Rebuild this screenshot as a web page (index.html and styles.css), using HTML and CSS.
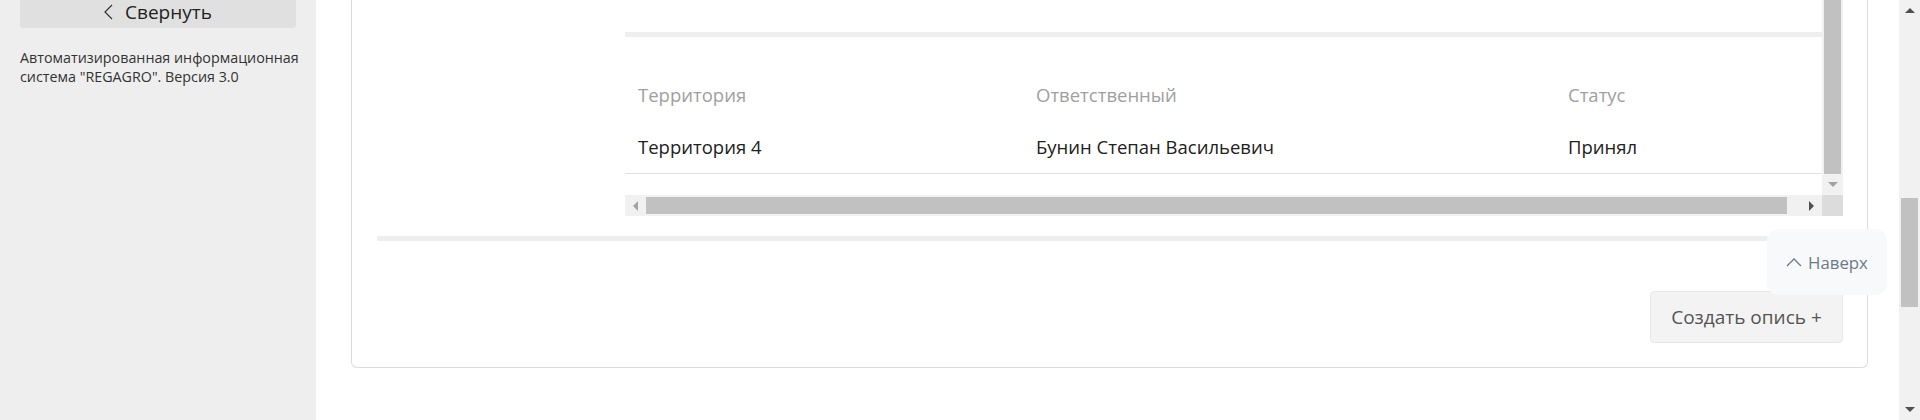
FILE: index.html
```html
<!DOCTYPE html>
<html lang="ru">
<head>
<meta charset="utf-8">
<title>REGAGRO</title>
<link rel="stylesheet" href="styles.css">
</head>
<body>
<div class="app">
  <aside class="sidebar">
    <button class="collapse">
      <svg class="chev-left" width="9" height="16" viewBox="0 0 9 16"><polyline points="8,1 1,8 8,15" fill="none" stroke="#333" stroke-width="1.2"/></svg>
      <span>Свернуть</span>
    </button>
    <p class="about">Автоматизированная информационная<br>система "REGAGRO". Версия 3.0</p>
  </aside>
  <main class="main">
    <section class="card">
      <div class="tablebox">
        <div class="tablerow">
          <div class="viewport">
            <div class="topbar"></div>
            <div class="grid head">
              <div>Территория</div><div>Ответственный</div><div>Статус</div>
            </div>
            <div class="grid body">
              <div>Территория 4</div><div>Бунин Степан Васильевич</div><div>Принял</div>
            </div>
          </div>
          <div class="vscroll">
            <div class="vthumb"></div>
            <div class="sbtn"><span class="tri down dis"></span></div>
          </div>
        </div>
        <div class="hscroll">
          <div class="sbtn"><span class="tri left dis"></span></div>
          <div class="hthumb"></div>
          <div class="hspace"></div>
          <div class="sbtn"><span class="tri right"></span></div>
          <div class="corner"></div>
        </div>
      </div>
      <div class="divider"></div>
      <div class="actions">
        <button class="create">Создать опись +</button>
      </div>
    </section>
  </main>
  <div class="pagescroll">
    <div class="psbtn"><span class="tri up"></span></div>
    <div class="pstrack"><div class="psthumb"></div></div>
    <div class="psbtn"><span class="tri down"></span></div>
  </div>
  <button class="totop">
    <svg width="16" height="10" viewBox="0 0 16 10"><polyline points="1,9 8,2 15,9" fill="none" stroke="#6c7a89" stroke-width="1.3"/></svg>
    <span>Наверх</span>
  </button>
</div>
</body>
</html>
```
FILE: styles.css
```css
* { box-sizing: border-box; }
html, body { margin: 0; padding: 0; }
body {
  width: 1920px;
  height: 420px;
  overflow: hidden;
  font-family: "Open Sans", "Noto Sans", sans-serif;
  background: #fff;
  color: #212121;
}
.app { display: flex; height: 420px; }

.sidebar {
  width: 316px;
  flex: none;
  background: #eeeeee;
  padding: 0 20px;
}
.collapse {
  display: flex;
  align-items: center;
  justify-content: center;
  gap: 12px;
  width: 100%;
  height: 28px;
  padding: 0 0 4px;
  border: none;
  border-radius: 0 0 4px 4px;
  background: #e0e0e0;
  font-family: inherit;
  font-size: 19px;
  line-height: 24px;
  color: #222;
}
.about {
  margin: 20px 0 0;
  font-size: 14.3px;
  line-height: 19px;
  white-space: nowrap;
  color: #333;
}

.main {
  flex: 1;
  padding: 0 31px 0 35px;
}
.card {
  border: 1px solid #dcdcdc;
  border-top: none;
  border-radius: 0 0 6px 6px;
  padding: 0 24px 24px 25px;
}
.tablebox { margin-left: 248px; }
.tablerow { display: flex; }
.viewport {
  flex: 1;
  padding: 32px 0 21px;
}
.topbar { height: 5px; background: #eeeeee; }
.grid {
  display: grid;
  grid-template-columns: 398px 532px 1fr;
  padding-left: 13px;
  font-size: 18.5px;
}
.head {
  padding-top: 44px;
  padding-bottom: 11px;
  line-height: 28px;
  color: #a0a0a0;
}
.body {
  line-height: 53px;
  border-bottom: 1px solid #e0e0e0;
  color: #212121;
}

.vscroll {
  width: 21px;
  display: flex;
  flex-direction: column;
  background: #f1f1f1;
}
.vthumb { flex: 1; margin: 0 2px; background: #c1c1c1; }
.sbtn {
  width: 21px;
  height: 21px;
  flex: none;
  display: flex;
  align-items: center;
  justify-content: center;
}
.hscroll {
  display: flex;
  height: 21px;
  background: #f1f1f1;
}
.hthumb { width: 1141px; margin: 2px 0; background: #c1c1c1; }
.hspace { flex: 1; }
.corner { width: 21px; background: #dcdcdc; }

.tri { width: 0; height: 0; display: block; }
.tri.down { border-left: 5px solid transparent; border-right: 5px solid transparent; border-top: 5px solid #505050; }
.tri.up { border-left: 5px solid transparent; border-right: 5px solid transparent; border-bottom: 5px solid #505050; }
.tri.left { border-top: 5px solid transparent; border-bottom: 5px solid transparent; border-right: 5px solid #505050; }
.tri.right { border-top: 5px solid transparent; border-bottom: 5px solid transparent; border-left: 5px solid #505050; }
.tri.down.dis { border-top-color: #a3a3a3; }
.tri.left.dis { border-right-color: #a3a3a3; }

.divider { margin-top: 20px; height: 5px; background: #eeeeee; }
.actions { display: flex; justify-content: flex-end; margin-top: 50px; }
.create {
  width: 193px;
  height: 52px;
  border: 1px solid #e6e6e6;
  border-radius: 4px;
  background: #f3f3f3;
  font-family: inherit;
  font-size: 19px;
  color: #555;
}

.pagescroll {
  width: 21px;
  flex: none;
  display: flex;
  flex-direction: column;
  background: #f1f1f1;
}
.psbtn { height: 21px; display: flex; align-items: center; justify-content: center; }
.pstrack { flex: 1; padding-top: 177px; }
.psthumb { height: 109px; margin: 0 2px; background: #c1c1c1; }

.totop {
  position: fixed;
  left: 1767px;
  top: 229px;
  width: 120px;
  height: 66px;
  border: none;
  border-radius: 12px;
  background: #f8f9fa;
  display: flex;
  align-items: center;
  justify-content: center;
  gap: 6px;
  font-family: inherit;
  font-size: 16.8px;
  color: #6c7a89;
}
```
